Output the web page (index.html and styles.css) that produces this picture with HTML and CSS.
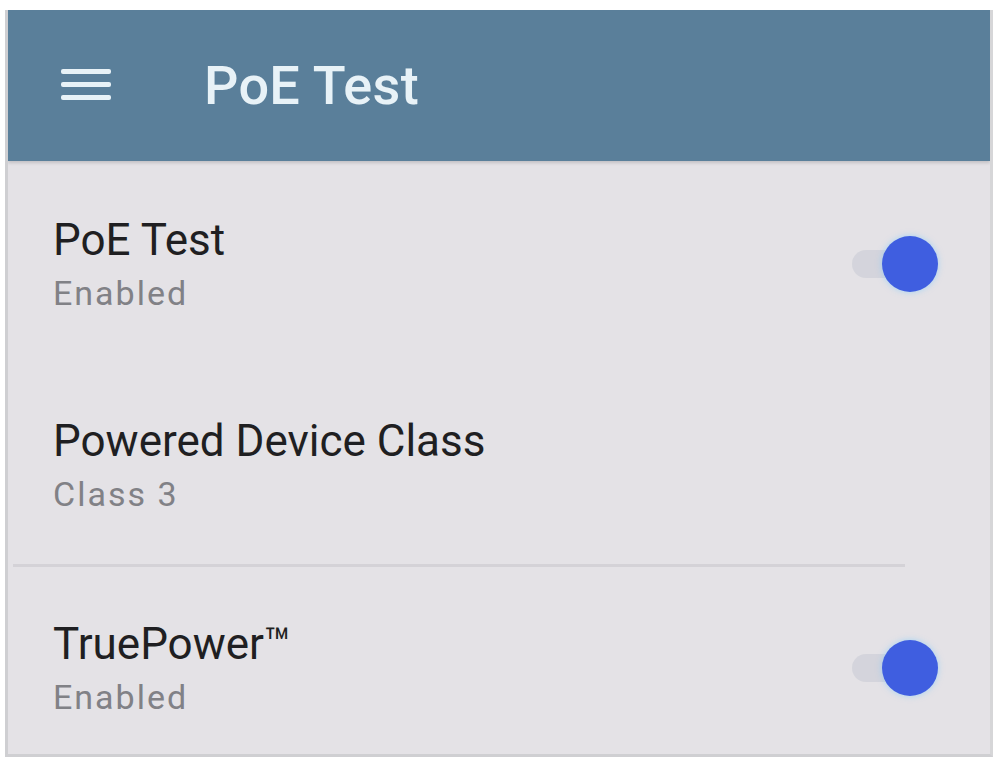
FILE: index.html
```html
<!DOCTYPE html>
<html>
<head>
<meta charset="utf-8">
<link rel="stylesheet" href="styles.css">
</head>
<body>
<div class="screen">
  <header class="appbar">
    <svg class="menu" width="52" height="34" viewBox="0 0 52 34">
      <rect x="1" y="1" width="50" height="5" rx="2" fill="#e8f2f7"/>
      <rect x="1" y="14" width="50" height="5" rx="2" fill="#e8f2f7"/>
      <rect x="1" y="27" width="50" height="5" rx="2" fill="#e8f2f7"/>
    </svg>
    <h1 class="title">PoE Test</h1>
  </header>
  <div class="list">
    <div class="row">
      <div class="texts">
        <div class="primary">PoE Test</div>
        <div class="secondary">Enabled</div>
      </div>
      <div class="switch"><span class="track"></span><span class="thumb"></span></div>
    </div>
    <div class="row">
      <div class="texts">
        <div class="primary">Powered Device Class</div>
        <div class="secondary">Class 3</div>
      </div>
    </div>
    <div class="divider"></div>
    <div class="row">
      <div class="texts">
        <div class="primary">TruePower™</div>
        <div class="secondary">Enabled</div>
      </div>
      <div class="switch"><span class="track"></span><span class="thumb"></span></div>
    </div>
  </div>
</div>
</body>
</html>
```

FILE: styles.css
```css
html, body {
  margin: 0;
  padding: 0;
  background: #ffffff;
}
body {
  font-family: Roboto, "Liberation Sans", Arial, sans-serif;
}
.screen {
  margin: 10px 8px 0 5px;
  width: 988px;
  height: 747px;
  overflow: hidden;
  display: flex;
  flex-direction: column;
  background: #e4e2e6;
  border-left: 3px solid #cfcfd2;
  border-right: 3px solid #d6d6d8;
  border-bottom: 3px solid #cfcfd2;
  box-sizing: border-box;
}
.appbar {
  height: 151px;
  flex: none;
  background: #5a7f9a;
  display: flex;
  align-items: center;
  padding-left: 52px;
  box-shadow: 0 2px 3px rgba(0,0,0,0.15);
}
.menu {
  flex: none;
  margin-top: -2px;
}
.title {
  margin: 0 0 0 92px;
  font-size: 54px;
  font-weight: 500;
  color: #e8f2f7;
  letter-spacing: 0.3px;
}
.list {
  flex: 1;
  padding-top: 2px;
}
.row {
  height: 201px;
  display: flex;
  align-items: center;
  justify-content: space-between;
  padding: 0 52px 0 45px;
  box-sizing: border-box;
}
.texts {
  display: flex;
  flex-direction: column;
}
.primary {
  font-size: 44px;
  line-height: 52px;
  color: #1f1f22;
}
.secondary {
  font-size: 34px;
  line-height: 40px;
  letter-spacing: 2px;
  color: #818186;
  margin-top: 7px;
}
.divider {
  height: 3px;
  margin: -1px 85px 0 5px;
  background: #d4d2d7;
}
.switch {
  position: relative;
  width: 88px;
  height: 58px;
  flex: none;
}
.track {
  position: absolute;
  left: 2px;
  right: 8px;
  top: 15px;
  height: 28px;
  border-radius: 14px;
  background: rgba(150, 160, 180, 0.2);
}
.thumb {
  position: absolute;
  right: 0;
  top: 1px;
  width: 56px;
  height: 56px;
  border-radius: 50%;
  background: #3f5ee0;
  box-shadow: 0 0 6px rgba(120, 200, 255, 0.6);
}
```
